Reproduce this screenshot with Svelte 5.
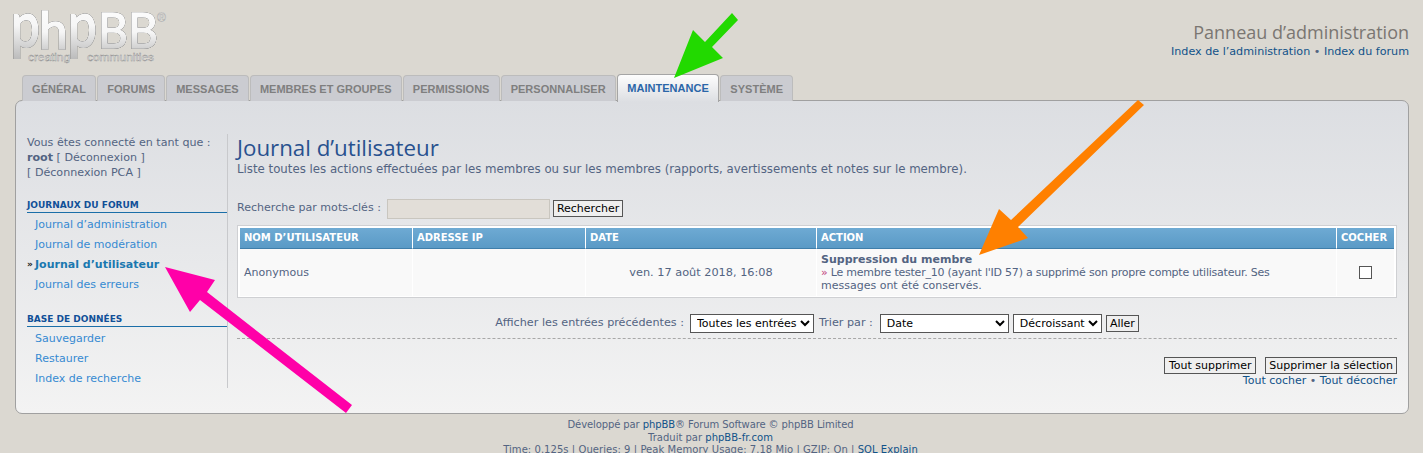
<script>
  const tabs = [
    { label: 'GÉNÉRAL' }, { label: 'FORUMS' }, { label: 'MESSAGES' }, { label: 'MEMBRES ET GROUPES' },
    { label: 'PERMISSIONS' }, { label: 'PERSONNALISER' }, { label: 'MAINTENANCE', active: true }, { label: 'SYSTÈME' }
  ];
  const journaux = [
    { label: 'Journal d’administration' }, { label: 'Journal de modération' },
    { label: 'Journal d’utilisateur', active: true }, { label: 'Journal des erreurs' }
  ];
  const base = ['Sauvegarder', 'Restaurer', 'Index de recherche'];
</script>

<div class="page">
  <header class="top">
    <svg class="logo" width="175" height="66" viewBox="0 0 175 66" role="img" aria-label="phpBB">
      <defs>
        <linearGradient id="lg" x1="0" y1="0" x2="0" y2="1">
          <stop offset="0" stop-color="#ffffff" />
          <stop offset="0.55" stop-color="#f6f6f6" />
          <stop offset="1" stop-color="#b9b9b9" />
        </linearGradient>
      </defs>
      <g class="lg-group">
        <text class="lg-word" transform="translate(11 47) scale(.78 .98)">p</text>
        <text class="lg-word" transform="translate(39 49) scale(.78 .78)">h</text>
        <text class="lg-word" transform="translate(68 47) scale(.78 .98)">p</text>
        <text class="lg-word" transform="translate(98 48) scale(.7 .72)">B</text>
        <text class="lg-word" transform="translate(128 48) scale(.7 .72)">B</text>
      </g>
      <text class="lg-small" x="28" y="61" textLength="42" lengthAdjust="spacingAndGlyphs">creating</text>
      <text class="lg-small" x="87" y="61" textLength="67" lengthAdjust="spacingAndGlyphs">communities</text>
      <text class="lg-reg" x="157" y="22">®</text>
    </svg>
    <div class="titles">
      <div class="ptitle">Panneau d’administration</div>
      <div class="plinks"><a>Index de l’administration</a> • <a>Index du forum</a></div>
    </div>
  </header>

  <nav class="tabs">
    {#each tabs as t}
      <div class="tab" class:active={t.active}>{t.label}</div>
    {/each}
  </nav>

  <section class="panel">
    <aside class="side">
      <div class="who">Vous êtes connecté en tant que :<br /><b>root</b> [ <a>Déconnexion</a> ]<br />[ <a>Déconnexion PCA</a> ]</div>
      <div class="mhead first">JOURNAUX DU FORUM</div>
      <ul>
        {#each journaux as j}
          <li class:on={j.active}>{j.label}</li>
        {/each}
      </ul>
      <div class="mhead second">BASE DE DONNÉES</div>
      <ul>
        {#each base as b}
          <li>{b}</li>
        {/each}
      </ul>
    </aside>

    <main class="main">
      <h1>Journal d’utilisateur</h1>
      <p class="lead">Liste toutes les actions effectuées par les membres ou sur les membres (rapports, avertissements et notes sur le membre).</p>

      <div class="search">
        <span>Recherche par mots-clés :</span>
        <input class="kw" type="text" />
        <button>Rechercher</button>
      </div>

      <div class="tablebox">
        <table>
          <colgroup>
            <col style="width:172px" /><col style="width:173px" /><col style="width:231px" /><col style="width:520px" /><col />
          </colgroup>
          <thead>
            <tr><th>NOM D’UTILISATEUR</th><th>ADRESSE IP</th><th>DATE</th><th>ACTION</th><th>COCHER</th></tr>
          </thead>
          <tbody>
            <tr>
              <td>Anonymous</td>
              <td></td>
              <td class="c date">ven. 17 août 2018, 16:08</td>
              <td class="act"><b>Suppression du membre</b><br /><span class="tight"><span class="raq">»</span> Le membre tester_10 (ayant l'ID 57) a supprimé son propre compte utilisateur. Ses</span><br />messages ont été conservés.</td>
              <td class="c"><span class="box"></span></td>
            </tr>
          </tbody>
        </table>
      </div>

      <div class="filters">
        <span class="fl">Afficher les entrées précédentes :</span>
        <select class="s1"><option>Toutes les entrées</option></select>
        <span class="fl">Trier par :</span>
        <select class="s2"><option>Date</option></select>
        <select class="s3"><option>Décroissant</option></select>
        <button class="go">Aller</button>
      </div>

      <div class="actions">
        <button class="all">Tout supprimer</button>
        <button>Supprimer la sélection</button>
      </div>
      <div class="marks"><a>Tout cocher</a> • <a>Tout décocher</a></div>
    </main>
  </section>

  <footer class="foot">
    <div class="l1">Développé par <a>phpBB</a>® Forum Software © phpBB Limited</div>
    <div>Traduit par <a>phpBB-fr.com</a></div>
    <div class="l3">Time: 0.125s | Queries: 9 | Peak Memory Usage: 7.18 Mio | GZIP: On | <a>SQL Explain</a></div>
  </footer>

  <svg class="arrows" width="1423" height="453" viewBox="0 0 1423 453" aria-hidden="true">
    <polygon fill="#22d900" points="674,78 693,30 705,42 732,13 738,20 712,47 723,58" />
    <polygon fill="#ff8000" points="979,255 999,209 1011,220 1138,100 1144,105 1018,227 1028,238" />
    <polygon fill="#ff00a8" points="165,267 215,280 207,292 352,405 346,413 200,300 190,312" />
  </svg>
</div>

<style>
  :global(html), :global(body) { margin: 0; height: 453px; overflow: hidden; }
  :global(body) {
    background: #dbd8d1;
    font-family: "DejaVu Sans", Verdana, sans-serif;
    font-size: 11px;
    color: #536482;
  }
  .page { position: relative; width: 1423px; height: 453px; overflow: hidden; }
  a { color: #105289; }

  .top { display: flex; justify-content: space-between; height: 74px; padding-right: 14px; }
  .logo { display: block; }
  .lg-group { filter: drop-shadow(0 0 .5px #666) drop-shadow(0 0 .5px #888); }
  .lg-word { font-family: "Lato", sans-serif; font-size: 66px; font-weight: 400; fill: url(#lg); stroke: url(#lg); stroke-width: 2.2px; }
  .lg-small { font-family: "Liberation Sans", sans-serif; font-size: 11px; fill: #f4f4f4; stroke: #8d8d8d; stroke-width: .4px; }
  .lg-reg { font-family: "Liberation Sans", sans-serif; font-size: 12px; fill: #f2f2f2; stroke: #999; stroke-width: .3px; }
  .titles { text-align: right; padding-top: 21px; }
  .ptitle { font-family: "Open Sans", sans-serif; font-size: 18px; line-height: 22px; color: #7a7672; }
  .plinks { font-size: 11.15px; line-height: 14px; margin-top: 2px; color: #536482; }

  .tabs { display: flex; gap: 1px; height: 27px; padding-left: 22px; align-items: flex-end; position: relative; z-index: 1; }
  .tab {
    box-sizing: border-box;
    height: 26px;
    line-height: 26px;
    padding: 0 9.1px;
    font-family: "Liberation Sans", Arial, sans-serif;
    font-weight: bold;
    font-size: 11px;
    letter-spacing: .02px;
    color: #7f7f7f;
    background: #cbccd1;
    border: 1px solid #bcbcbc;
    border-bottom: 0;
    border-radius: 4px 4px 0 0;
  }
  .tab.active {
    height: 28px;
    margin-bottom: -1px;
    padding: 0 9.5px;
    color: #2a66a8;
    background: linear-gradient(#fdfdfd, #dcdee2);
    border-color: #a5a5a5;
  }

  .panel {
    box-sizing: border-box;
    display: flex;
    width: 1394px;
    height: 314px;
    margin-left: 15px;
    margin-top: -1px;
    padding: 33px 11px 0;
    background: linear-gradient(#dcdee2, #f3f3f3);
    border: 1px solid #a0a0a0;
    border-radius: 7px;
  }

  .side { box-sizing: border-box; width: 201px; height: 254px; border-right: 1px solid #c8c9cc; }
  .who { line-height: 15px; margin-top: 1px; font-size: 11.12px; }
  .who b { color: #536482; }
  .who a { color: #536482; }
  .mhead {
    width: 200px;
    box-sizing: border-box;
    font-size: 9px;
    font-weight: bold;
    line-height: 14px;
    color: #115098;
    border-bottom: 1px solid #1a6ea8;
  }
  .mhead.first { margin-top: 18px; }
  .mhead.second { margin-top: 17px; }
  ul { list-style: none; margin: 0; padding: 2px 0 0; }
  li { height: 20px; line-height: 20px; padding-left: 8px; color: #368ad2; position: relative; }
  li.on { font-weight: bold; color: #1a78b0; }
  li.on::before { content: "»"; position: absolute; left: 0; top: -1px; color: #222; font-size: 9px; font-weight: bold; }

  .main { flex: 1; margin-left: 9px; min-width: 0; }
  h1 {
    margin: 0;
    font-family: "Open Sans", sans-serif;
    font-weight: 400;
    font-size: 22.3px;
    line-height: 28px;
    color: #28518f;
  }
  .lead { margin: 0; line-height: 15px; font-size: 11.77px; color: #536482; }

  .search { display: flex; align-items: flex-start; height: 21px; margin-top: 21px; }
  .search span { line-height: 18px; margin-top: 1px; font-size: 11.05px; }
  .kw {
    box-sizing: border-box;
    width: 163px;
    height: 20px;
    margin: 1px 3px 0 6px;
    padding: 0;
    background: #e2ded8;
    border: 1px solid #c9c6bf;
  }
  .search button { margin-top: 2px; }
  button {
    box-sizing: border-box;
    height: 17px;
    padding: 0 3px;
    font-family: "DejaVu Sans", sans-serif;
    font-size: 11px;
    line-height: 14px;
    color: #000;
    background: #efefef;
    border: 1px solid #555;
    border-radius: 0;
  }

  .tablebox {
    box-sizing: border-box;
    width: 1160px;
    height: 73px;
    margin-top: 6px;
    border: 1px solid #cfd0d3;
    padding: 2px;
    background: #fff;
  }
  table { width: 100%; height: 68px; border-collapse: separate; border-spacing: 0; table-layout: fixed; }
  th {
    height: 20px;
    padding: 0 5px 0 4px;
    font-size: 10px;
    font-weight: bold;
    line-height: 20px;
    text-align: left;
    color: #fff;
    background: linear-gradient(#6eaad3, #5a9ac6);
    border-bottom: 1px solid #3f7eaa;
    border-left: 1px solid #fff;
    white-space: nowrap;
  }
  th:first-child { border-left: 0; }
  td {
    padding: 0 4px;
    background: #f9f9f9;
    border-left: 1px solid #fff;
    line-height: 13px;
    vertical-align: middle;
  }
  td:first-child { border-left: 0; }
  td.c { text-align: center; }
  td.date { font-size: 11.3px; }
  td.act { white-space: nowrap; }
  td.act b { color: #536482; }
  .tight { letter-spacing: -.23px; }
  .raq { color: #c0407a; }
  .box { display: inline-block; box-sizing: border-box; width: 13px; height: 13px; border: 1px solid #555; background: #fff; vertical-align: middle; }

  .filters { display: flex; justify-content: center; align-items: center; height: 19px; margin-top: 16px; gap: 4px; width: 1160px; }
  .fl { color: #536482; margin-top: -3px; font-size: 11.2px; }
  select {
    box-sizing: border-box;
    height: 19px;
    padding: 0 0 0 2px;
    font-family: "DejaVu Sans", sans-serif;
    font-size: 11px;
    color: #000;
    background: #fff;
    border: 1px solid #555;
    border-radius: 0;
  }
  .s1 { width: 124px; margin: 0 1px 0 2px; }
  .s2 { width: 129px; margin-left: 3px; }
  .s3 { width: 89px; }
  .go { width: 33px; padding: 0; }

  .actions { display: flex; justify-content: flex-end; gap: 9px; padding-top: 7px; border-top: 1px dashed #a8a8a8; width: 1160px; margin-top: 5px; }
  .actions button { margin-top: 11px; }
  .all { width: 92px; padding: 0; }
  .marks { width: 1160px; text-align: right; line-height: 14px; margin-top: 0; }

  .foot { text-align: center; font-size: 10px; line-height: 12.5px; padding-top: 5px; width: 1421px; }
  .l1 { letter-spacing: -.1px; }
  .l3 { letter-spacing: .05px; }

  .arrows { position: absolute; left: 0; top: 0; pointer-events: none; z-index: 5; }
</style>
